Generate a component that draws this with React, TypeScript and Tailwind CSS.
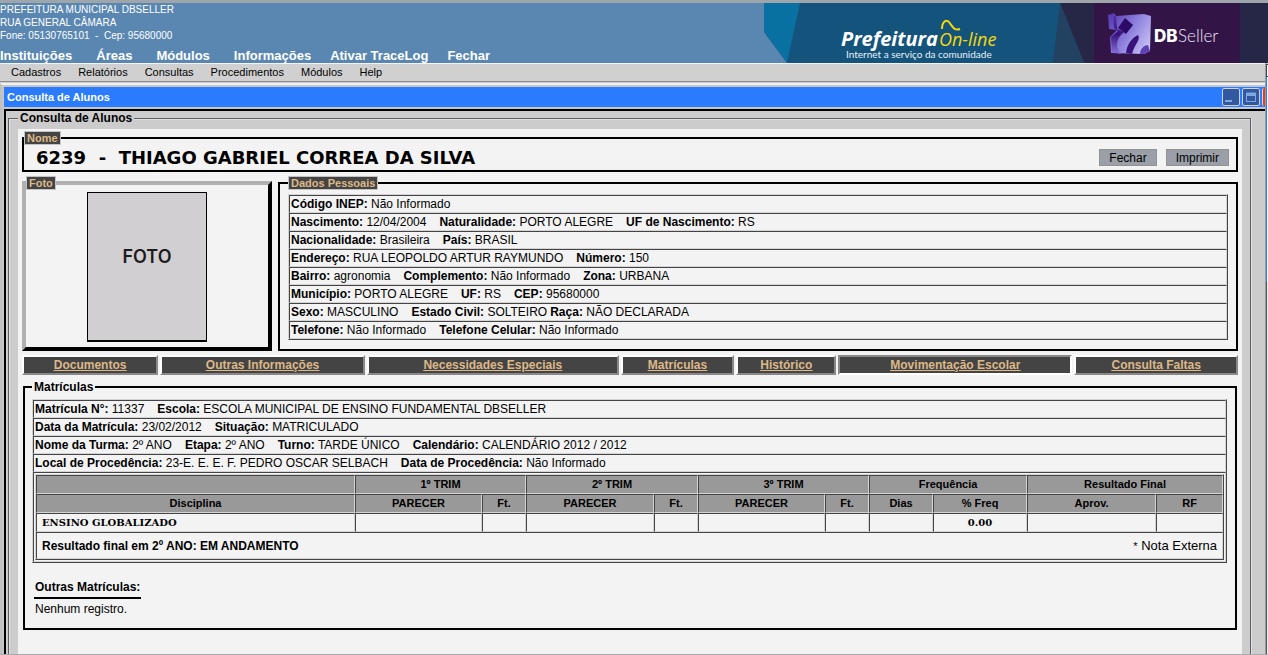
import React from 'react';

type Pair = [label: string, value: string];

const mainMenu = ['Instituições', 'Áreas', 'Módulos', 'Informações'];
const extraMenu = ['Ativar TraceLog', 'Fechar'];
const subMenu = ['Cadastros', 'Relatórios', 'Consultas', 'Procedimentos', 'Módulos', 'Help'];

const personal: Pair[][] = [
  [['Código INEP:', 'Não Informado']],
  [['Nascimento:', '12/04/2004'], ['Naturalidade:', 'PORTO ALEGRE'], ['UF de Nascimento:', 'RS']],
  [['Nacionalidade:', 'Brasileira'], ['País:', 'BRASIL']],
  [['Endereço:', 'RUA LEOPOLDO ARTUR RAYMUNDO'], ['Número:', '150']],
  [['Bairro:', 'agronomia'], ['Complemento:', 'Não Informado'], ['Zona:', 'URBANA']],
  [['Município:', 'PORTO ALEGRE'], ['UF:', 'RS'], ['CEP:', '95680000']],
  [['Sexo:', 'MASCULINO'], ['Estado Civil:', 'SOLTEIRO'], ['Raça:', 'NÃO DECLARADA']],
  [['Telefone:', 'Não Informado'], ['Telefone Celular:', 'Não Informado']],
];

const enrolment: Pair[][] = [
  [['Matrícula N°:', '11337'], ['Escola:', 'ESCOLA MUNICIPAL DE ENSINO FUNDAMENTAL DBSELLER']],
  [['Data da Matrícula:', '23/02/2012'], ['Situação:', 'MATRICULADO']],
  [['Nome da Turma:', '2º ANO'], ['Etapa:', '2º ANO'], ['Turno:', 'TARDE ÚNICO'], ['Calendário:', 'CALENDÁRIO 2012 / 2012']],
  [['Local de Procedência:', '23-E. E. E. F. PEDRO OSCAR SELBACH'], ['Data de Procedência:', 'Não Informado']],
];

const tabs = [
  { label: 'Documentos', grow: 'flex-[135]' },
  { label: 'Outras Informações', grow: 'flex-[205]' },
  { label: 'Necessidades Especiais', grow: 'flex-[253]' },
  { label: 'Matrículas', grow: 'flex-[112]' },
  { label: 'Histórico', grow: 'flex-[98]' },
  { label: 'Movimentação Escolar', grow: 'flex-[235]', pressed: true },
  { label: 'Consulta Faltas', grow: 'flex-[163]' },
];

const columns = [
  'w-[319px]', 'w-[127px]', 'w-[44px]', 'w-[128px]', 'w-[44px]', 'w-[127px]',
  'w-[44px]', 'w-[64px]', 'w-[94px]', 'w-[129px]', 'w-[67px]',
];

const subHeads = ['Disciplina', 'PARECER', 'Ft.', 'PARECER', 'Ft.', 'PARECER', 'Ft.', 'Dias', '% Freq', 'Aprov.', 'RF'];

const frame = 'w-full border-separate border-spacing-0 border border-t-[#d4d4d4] border-l-[#d4d4d4] border-r-[#444] border-b-[#444]';
const cell = 'border border-t-[#444] border-l-[#444] border-r-[#d4d4d4] border-b-[#d4d4d4]';
const headCell = `${cell} pb-[2px]`;
const tag = 'border border-[#c4c4c4] bg-[#444] px-[2px] text-[11px] leading-[12px] font-bold text-[#deb887]';
const action = 'h-[17px] border border-[#929292] bg-[#9a9fa8] px-[9px] text-xs leading-[17px]';

function InfoRow({ pairs }: { pairs: Pair[] }) {
  return (
    <tr>
      <td className={`${cell} h-[18px] px-px text-xs leading-[14px]`}>
        {pairs.map(([label, value]) => (
          <span key={label} className={label === 'Estado Civil:' ? 'mr-[3px]' : 'mr-[13px]'}>
            <b>{label}</b> {value}
          </span>
        ))}
      </td>
    </tr>
  );
}

function Banner() {
  return (
    <svg width="504" height="60" viewBox="0 0 504 60" className="shrink-0" role="img" aria-label="Prefeitura On-line e DBSeller">
      <defs>
        <linearGradient id="cube" x1="0" y1="0.2" x2="1" y2="0.8">
          <stop offset="0" stopColor="#5a3fb4" />
          <stop offset="0.55" stopColor="#9488e0" />
          <stop offset="1" stopColor="#c8c4f4" />
        </linearGradient>
        <linearGradient id="cubeSide" x1="0" y1="0" x2="0" y2="1">
          <stop offset="0" stopColor="#5a34a8" />
          <stop offset="0.5" stopColor="#38127c" />
          <stop offset="1" stopColor="#8a72dc" />
        </linearGradient>
      </defs>
      <rect width="504" height="60" fill="#262747" />
      <path d="M0 0H36V60H23L0 29Z" fill="#0871a1" />
      <path d="M0 29L23 60H0Z" fill="#5a87b2" />
      <path d="M36 0H296L320 60H23Z" fill="#14537b" />
      <path d="M296 0L320 60H289Z" fill="#234262" />
      <rect x="330" width="146" height="60" fill="#321447" />
      <text x="77" y="43" fontFamily="'Open Sans', sans-serif" fontWeight="700" fontStyle="italic" fontSize="20" fill="#fff">Prefeitura</text>
      <text x="175" y="43" fontFamily="'Open Sans', sans-serif" fontWeight="400" fontStyle="italic" fontSize="18" fill="#f5d90a">On-line</text>
      <path d="M178 26C178 19 182 16 185 19C189 24 190 28 196 26" fill="none" stroke="#f5d90a" strokeWidth="2" />
      <text x="82" y="55" fontFamily="Lato, sans-serif" fontSize="10" fill="#e8f2f8">Internet a serviço da comunidade</text>
      <path d="M344 12L350 10L352 13L380 11L387 13L386 48L380 51L347 50L346 34L353 27L345 26Z" fill="url(#cube)" />
      <path d="M344 12L349 11L350 25L354 28L347 34L348 49L357 51C350 43 353 35 360 29L353 26L352 13Z" fill="url(#cubeSide)" />
      <path d="M361 15L369 22L362 31L354 25Z" fill="#2d0a66" />
      <path d="M362 50C363 41 368 35 374 32C377 37 371 40 368 51Z" fill="#38137c" />
      <path d="M376 51C376 46 380 42 384 42L386 48L380 51Z" fill="#5f40b5" />
      <text x="390" y="39" fontFamily="Inter, sans-serif" fontWeight="800" fontSize="17" fill="#fff">DB</text>
      <text x="414" y="39" fontFamily="Lato, sans-serif" fontWeight="300" fontSize="17" fill="#f0e8f8">Seller</text>
    </svg>
  );
}

function WindowButtons() {
  const base = 'h-[18px] w-[18px] rounded-[2px] border border-[#c9d3e8] bg-[#3158a0]';
  return (
    <div className="flex items-center gap-[2px]">
      <button type="button" aria-label="Minimizar" className={base}>
        <svg viewBox="0 0 16 16" className="block"><rect x="2" y="11" width="7" height="2" fill="#80a8e0" /></svg>
      </button>
      <button type="button" aria-label="Maximizar" className={base}>
        <svg viewBox="0 0 16 16" className="block">
          <path d="M3.5 4H12.5V12.5H3.5Z" fill="none" stroke="#80a8e0" />
          <path d="M3 4H13V7H3Z" fill="#80a8e0" />
        </svg>
      </button>
      <button type="button" aria-label="Fechar janela" className="h-[18px] w-[3px] rounded-l-[2px] border-l border-[#e8d0d0] bg-[#d8402c]" />
    </div>
  );
}

function Grades() {
  return (
    <table className={`${frame} table-fixed`}>
      <colgroup>
        {columns.map((width, i) => <col key={i} className={width} />)}
      </colgroup>
      <thead className="bg-[#999]">
        <tr className="h-[19px]">
          <th className={headCell} />
          <th colSpan={2} className={headCell}>1º TRIM</th>
          <th colSpan={2} className={headCell}>2º TRIM</th>
          <th colSpan={2} className={headCell}>3º TRIM</th>
          <th colSpan={2} className={headCell}>Frequência</th>
          <th colSpan={2} className={headCell}>Resultado Final</th>
        </tr>
        <tr className="h-[19px]">
          {subHeads.map((head, i) => <th key={i} className={headCell}>{head}</th>)}
        </tr>
      </thead>
      <tbody>
        <tr className="h-[19px] font-['DejaVu_Serif',serif] text-[10px] font-bold">
          <td className={`${cell} px-[5px]`}>ENSINO GLOBALIZADO</td>
          {subHeads.slice(1).map((head, i) => (
            <td key={i} className={`${cell} text-center`}>{head === '% Freq' ? '0.00' : ''}</td>
          ))}
        </tr>
        <tr className="h-[27px]">
          <td colSpan={11} className={`${cell} px-[5px]`}>
            <div className="flex items-center justify-between">
              <b className="text-xs leading-[14px]">Resultado final em 2º ANO: EM ANDAMENTO</b>
              <span className="text-[13px]"><span className="text-[11px]">*</span> Nota Externa</span>
            </div>
          </td>
        </tr>
      </tbody>
    </table>
  );
}

export default function App() {
  return (
    <div className="flex min-h-screen flex-col bg-[#ccc] font-['Liberation_Sans',Arial,sans-serif] text-[11px] leading-[14px] text-black">
      <header className="flex justify-between overflow-hidden border-t-[3px] border-[#9ea5ab] bg-[#5a87b2] text-white">
        <div className="flex flex-col justify-between whitespace-nowrap">
          <address className="text-[10px] leading-[13px] not-italic">
            PREFEITURA MUNICIPAL DBSELLER
            <br />
            RUA GENERAL CÂMARA
            <br />
            Fone: 05130765101 &nbsp;-&nbsp; Cep: 95680000
          </address>
          <nav className="flex gap-[19px] text-[13px] leading-[15px] font-bold">
            <div className="flex gap-6">
              {mainMenu.map((item) => <a key={item} href="#">{item}</a>)}
            </div>
            {extraMenu.map((item) => <a key={item} href="#">{item}</a>)}
          </nav>
        </div>
        <Banner />
      </header>

      <div className="flex flex-1">
        <div className="flex min-w-0 flex-1 flex-col">
          <nav className="flex h-[19px] gap-[17px] border-t border-b border-t-[#f4f4f4] border-b-[#8c8c8c] bg-[#d0d0d0] px-[11px] leading-[17px]">
            {subMenu.map((item) => <a key={item} href="#">{item}</a>)}
          </nav>

          <section className="mt-px flex flex-1 flex-col border-t-2 border-l-2 border-t-[#f0f0f0] border-l-[#c0c0c0] bg-[#c6c6c6] pt-[2px] pl-[2px]">
            <div className="flex h-5 items-center justify-between bg-[#2b7bff] pl-[3px]">
              <h1 className="font-bold text-white">Consulta de Alunos</h1>
              <WindowButtons />
            </div>

            <div className="mt-[2px] flex flex-1 flex-col border-t-2 border-l-2 border-black bg-[#ccc] pr-[14px] pl-[2px]">
              <fieldset className="flex min-w-0 flex-1 flex-col border border-[#5f5f68] pt-1 pr-[8px] pl-[9px] shadow-[inset_1px_1px_0_#e0e0e0,1px_0_0_#e0e0e0]">
                <legend className="bg-[#ccc] px-[2px] text-xs leading-[14px] font-bold">Consulta de Alunos</legend>
                <div className="h-full bg-[#f3f3f3] px-1 pt-[2px]">
                  <fieldset className="border-2 border-black py-1 pr-px">
                    <legend className={tag}>Nome</legend>
                    <div className="flex h-[17px] items-center justify-between pr-[6px] pl-3">
                      <h2 className="font-['DejaVu_Sans',Verdana,sans-serif] text-[18px] font-bold whitespace-nowrap">6239 &nbsp;-&nbsp; THIAGO GABRIEL CORREA DA SILVA</h2>
                      <div className="flex gap-[9px]">
                        <button type="button" className={action}>Fechar</button>
                        <button type="button" className={action}>Imprimir</button>
                      </div>
                    </div>
                  </fieldset>

                  <div className="mt-1 flex gap-[6px]">
                    <fieldset className="w-[250px] shrink-0 border-4 border-t-[#b0b0b0] border-r-black border-b-black border-l-[#b0b0b0] pt-[2px]">
                      <legend className={tag}>Foto</legend>
                      <div className="mx-auto flex h-[150px] w-[120px] items-center justify-center border border-b-2 border-black bg-[#d1cfd2] pb-[20px] font-['Inter',sans-serif] text-[18px] font-semibold text-[#1c1c1c]">
                        FOTO
                      </div>
                    </fieldset>
                    <fieldset className="min-w-0 flex-1 border-2 border-black px-2 pt-1 pb-[9px]">
                      <legend className={tag}>Dados Pessoais</legend>
                      <table className={frame}>
                        <tbody>
                          {personal.map((pairs) => <InfoRow key={pairs[0][0]} pairs={pairs} />)}
                        </tbody>
                      </table>
                    </fieldset>
                  </div>

                  <nav className="mt-1 flex h-5 gap-[2px] text-center text-xs font-bold text-[#deb887] underline">
                    {tabs.map((tab) => (
                      <a
                        key={tab.label}
                        href="#"
                        className={`${tab.grow} border-2 bg-[#444] leading-[17px] ${tab.pressed ? 'border-t-[#888] border-r-white border-b-white border-l-[#888]' : 'border-t-white border-r-[#888] border-b-[#888] border-l-white'}`}
                      >
                        {tab.label}
                      </a>
                    ))}
                  </nav>

                  <fieldset className="mx-px mt-[5px] border-2 border-black pt-[5px] pr-2 pb-3 pl-[7px]">
                    <legend className="px-[2px] text-xs leading-[14px] font-bold">Matrículas</legend>
                    <table className={frame}>
                      <tbody>
                        {enrolment.map((pairs) => <InfoRow key={pairs[0][0]} pairs={pairs} />)}
                        <tr>
                          <td className={`${cell} p-px`}><Grades /></td>
                        </tr>
                      </tbody>
                    </table>
                    <div className="mt-[17px] px-[2px] text-xs leading-[14px]">
                      <h3 className="w-fit border-b-2 border-black px-px pb-[3px] font-bold">Outras Matrículas:</h3>
                      <p className="mt-[3px] px-px">Nenhum registro.</p>
                    </div>
                  </fieldset>
                </div>
              </fieldset>
            </div>
          </section>
        </div>

        <div className="flex w-[3px] flex-col border-l border-[#9a9aa2]">
          <div className="mt-px h-[13px] border border-r-0 border-[#444] bg-white" />
          <div className="h-[205px] border-l border-[#2b7bff] bg-white" />
          <div className="flex-1 border-l border-[#555] bg-[#eee]" />
        </div>
      </div>
      <div className="-mt-px h-px bg-[#aaaab0]" />
    </div>
  );
}
